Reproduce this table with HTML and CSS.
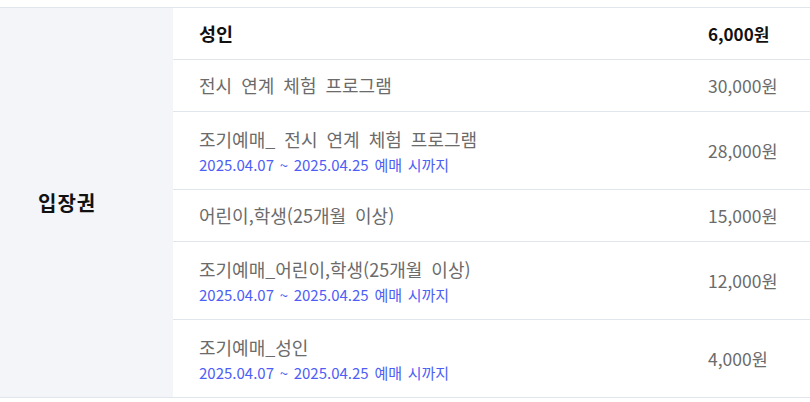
FILE: index.html
```html
<!DOCTYPE html>
<html lang="ko">
<head>
<meta charset="utf-8">
<link rel="stylesheet" href="styles.css">
</head>
<body>
<div class="price-table">
  <div class="category">입장권</div>
  <div class="rows">
    <div class="row head">
      <div class="name"><div class="title">성인</div></div>
      <div class="price">6,000원</div>
    </div>
    <div class="row">
      <div class="name"><div class="title">전시 연계 체험 프로그램</div></div>
      <div class="price">30,000원</div>
    </div>
    <div class="row tall">
      <div class="name">
        <div class="title">조기예매_ 전시 연계 체험 프로그램</div>
        <div class="period">2025.04.07 ~ 2025.04.25 예매 시까지</div>
      </div>
      <div class="price">28,000원</div>
    </div>
    <div class="row">
      <div class="name"><div class="title">어린이,학생(25개월 이상)</div></div>
      <div class="price">15,000원</div>
    </div>
    <div class="row tall">
      <div class="name">
        <div class="title">조기예매_어린이,학생(25개월 이상)</div>
        <div class="period">2025.04.07 ~ 2025.04.25 예매 시까지</div>
      </div>
      <div class="price">12,000원</div>
    </div>
    <div class="row tall last">
      <div class="name">
        <div class="title">조기예매_성인</div>
        <div class="period">2025.04.07 ~ 2025.04.25 예매 시까지</div>
      </div>
      <div class="price">4,000원</div>
    </div>
  </div>
</div>
</body>
</html>
```
FILE: styles.css
```css
html, body {
  margin: 0;
  padding: 0;
  background: #fff;
}
body {
  padding-top: 7px;
  font-family: "Noto Sans CJK KR", "Noto Sans", sans-serif;
}
.price-table {
  display: flex;
  border-top: 1px solid #e1e5ec;
  border-bottom: 1px solid #e1e5ec;
}
.category {
  width: 173px;
  flex: none;
  background: #f4f5f9;
  display: flex;
  align-items: center;
  padding-left: 38px;
  box-sizing: border-box;
  font-size: 20px;
  letter-spacing: 1px;
  font-weight: 700;
  color: #111;
}
.rows {
  flex: 1;
  display: flex;
  flex-direction: column;
}
.row {
  display: flex;
  align-items: center;
  border-bottom: 1px solid #e1e5ec;
  height: 51px;
  padding-left: 26px;
}
.row.tall {
  height: 77px;
}
.row.last {
  border-bottom: none;
}
.name {
  flex: 1;
}
.title {
  font-size: 18px;
  line-height: 25px;
  word-spacing: 4px;
  color: #6b6b6b;
}
.head .title {
  font-size: 18.5px;
}
.period {
  font-size: 15px;
  line-height: 20px;
  margin-top: 3px;
  word-spacing: 1.5px;
  color: #4d5ef6;
}
.price {
  width: 102px;
  flex: none;
  font-size: 17.5px;
  color: #6b6b6b;
}
.head .title,
.head .price {
  color: #111;
  font-weight: 700;
}
.head .price {
  font-size: 17px;
}
```
